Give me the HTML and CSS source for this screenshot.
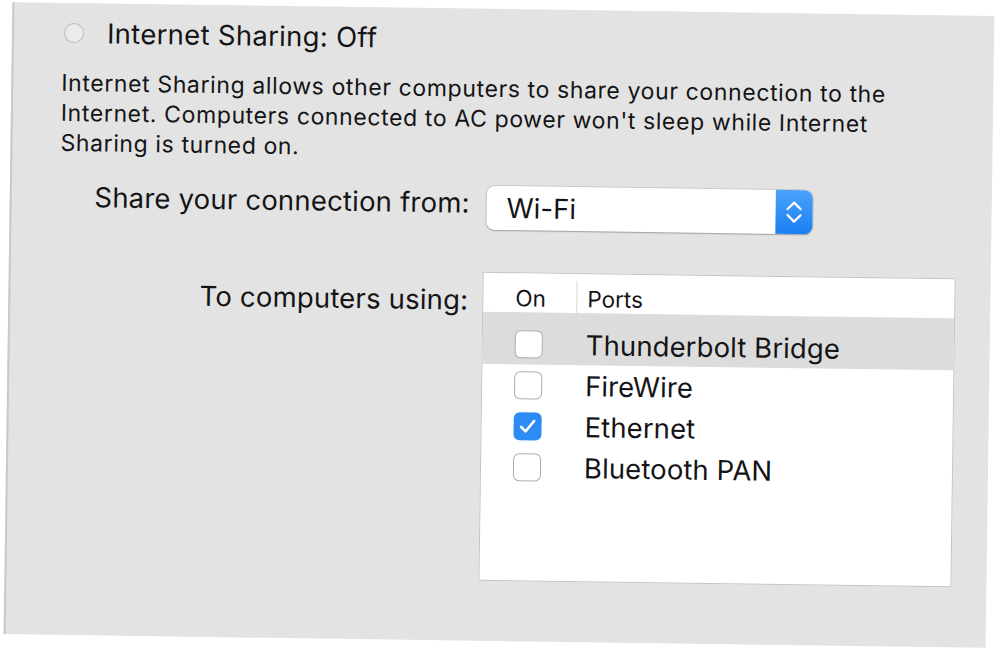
FILE: index.html
```html
<!DOCTYPE html>
<html>
<head>
<meta charset="utf-8">
<title>Internet Sharing</title>
<link rel="stylesheet" href="styles.css">
</head>
<body>
<div class="panel">
  <div class="title-row">
    <span class="radio"></span>
    <span class="title">Internet Sharing: Off</span>
  </div>
  <p class="desc">Internet Sharing allows other computers to share your connection to the<br>Internet. Computers connected to AC power won't sleep while Internet<br>Sharing is turned on.</p>
  <div class="form">
    <div class="label">Share your connection from:</div>
    <div class="popup">
      <span class="popup-value">Wi-Fi</span>
      <span class="stepper">
        <svg width="37" height="44" viewBox="0 0 37 44"><path d="M12 19 L18.5 12.5 L25 19"/><path d="M12 25 L18.5 31.5 L25 25"/></svg>
      </span>
    </div>
    <div class="label label-list">To computers using:</div>
    <div class="ports">
      <div class="ports-head">
        <span class="col-on">On</span>
        <span class="col-sep"></span>
        <span class="col-ports">Ports</span>
      </div>
      <div class="port-row first selected"><span class="cb"></span><span class="port-name">Thunderbolt Bridge</span></div>
      <div class="port-row"><span class="cb"></span><span class="port-name">FireWire</span></div>
      <div class="port-row"><span class="cb checked"><svg width="28" height="28" viewBox="0 0 28 28"><path d="M7.5 14.5 L12 19 L20.5 8.5"/></svg></span><span class="port-name">Ethernet</span></div>
      <div class="port-row"><span class="cb"></span><span class="port-name">Bluetooth PAN</span></div>
    </div>
  </div>
</div>
</body>
</html>
```
FILE: styles.css
```css
html, body {
  margin: 0;
  height: 100%;
  overflow: hidden;
  background: #ffffff;
}
body {
  font-family: Inter, "Liberation Sans", sans-serif;
  color: #141416;
}
.panel {
  box-sizing: border-box;
  width: 982px;
  height: 632px;
  margin: 9px 0 0 8px;
  padding: 13px 0 0 48px;
  background: #e3e3e3;
  border-left: 2px solid #c9c9c9;
  transform: rotate(0.8deg);
}
.title-row {
  display: flex;
  align-items: center;
  height: 34px;
}
.radio {
  width: 18px;
  height: 18px;
  margin-left: 2px;
  border: 1px solid #bdbdbd;
  border-radius: 50%;
  background: #ebebeb;
}
.title {
  margin-left: 23px;
  font-size: 27.5px;
  line-height: 34px;
  letter-spacing: 0.3px;
}
.desc {
  margin: 18px 0 0;
  font-size: 23px;
  line-height: 30px;
  letter-spacing: 0.62px;
}
.form {
  display: grid;
  grid-template-columns: 410px auto;
  column-gap: 17px;
  row-gap: 42px;
  margin-top: 22px;
  align-items: start;
}
.label {
  text-align: right;
  font-size: 27.5px;
  line-height: 34px;
  letter-spacing: 0.2px;
}
.label-list {
  margin-top: 11px;
}
.popup {
  width: 326px;
  height: 44px;
  display: flex;
  align-items: stretch;
  background: #ffffff;
  border-radius: 8px;
  box-shadow: 0 0 0 1px rgba(0,0,0,0.10), 0 1px 1.5px rgba(0,0,0,0.22);
}
.popup-value {
  flex: 1;
  padding-left: 20px;
  font-size: 27.5px;
  line-height: 44px;
}
.stepper {
  width: 37px;
  border-radius: 0 8px 8px 0;
  background: linear-gradient(#4aa2fa, #1b7ff2);
}
.stepper svg {
  display: block;
}
.stepper path {
  fill: none;
  stroke: #ffffff;
  stroke-width: 2.2;
  stroke-linecap: round;
  stroke-linejoin: round;
}
.ports {
  box-sizing: border-box;
  width: 473px;
  height: 309px;
  margin-left: -3px;
  background: #ffffff;
  border: 1px solid #c4c4c4;
}
.ports-head {
  display: flex;
  align-items: flex-start;
  height: 39px;
  font-size: 22.5px;
  line-height: 26px;
}
.col-on {
  margin: 12px 0 0 32px;
  width: 61px;
}
.col-sep {
  width: 1px;
  height: 32px;
  margin-top: 7px;
  background: #d9d9d9;
}
.col-ports {
  margin: 12px 0 0 10px;
}
.port-row {
  display: flex;
  align-items: center;
  height: 41px;
  padding-left: 32px;
}
.port-row.first {
  height: 52px;
  padding-top: 11px;
  box-sizing: border-box;
}
.port-row.selected {
  background: #dcdcdc;
}
.cb {
  box-sizing: border-box;
  width: 28px;
  height: 28px;
  border: 1.5px solid #adadad;
  border-radius: 6px;
  background: #ffffff;
  flex: none;
}
.cb.checked {
  border: none;
  background: #2d8cf4;
}
.cb svg {
  display: block;
}
.cb path {
  fill: none;
  stroke: #ffffff;
  stroke-width: 2.6;
  stroke-linecap: round;
  stroke-linejoin: round;
}
.port-name {
  margin-left: 43px;
  font-size: 27.5px;
  line-height: 34px;
  letter-spacing: 0.1px;
}
```
